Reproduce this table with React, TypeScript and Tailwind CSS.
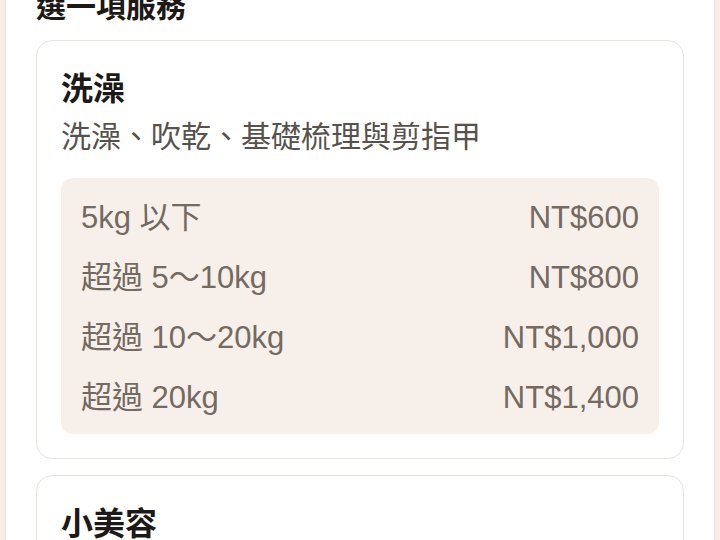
const services = [
  {
    name: "洗澡",
    desc: "洗澡、吹乾、基礎梳理與剪指甲",
    prices: [
      { label: "5kg 以下", price: "NT$600" },
      { label: "超過 5～10kg", price: "NT$800" },
      { label: "超過 10～20kg", price: "NT$1,000" },
      { label: "超過 20kg", price: "NT$1,400" },
    ],
  },
  {
    name: "小美容",
    desc: "洗澡加上腳底毛、屁屁毛與臉部修剪",
    prices: [
      { label: "5kg 以下", price: "NT$900" },
      { label: "超過 5～10kg", price: "NT$1,100" },
    ],
  },
];

const font = {
  fontFamily: '"Liberation Sans", "Noto Sans CJK TC", sans-serif',
};

export default function App() {
  return (
    <div className="h-[540px] overflow-hidden bg-[#f4ece5] px-[5px]" style={font}>
      <div className="flex h-full flex-col border-x border-[#ebe5dd] bg-white px-[30px]">
        <h2 className="-mt-[13px] text-[30px] font-bold leading-[40px] text-[#1c1917]">
          選一項服務
        </h2>

        <div className="mt-[13px] flex flex-col gap-4">
          {services.map((s) => (
            <div
              key={s.name}
              className="rounded-2xl border border-[#e8e4dc] bg-white px-6 pb-6 pt-7"
            >
              <h3 className="text-[32px] font-bold leading-[40px] text-[#1c1917]">
                {s.name}
              </h3>
              <p className="mt-[6px] text-[30px] leading-[44px] text-[#57524b]">
                {s.desc}
              </p>

              <div className="mt-[19px] flex flex-col gap-5 rounded-xl bg-[#f7efe9] px-5 pb-4 pt-5">
                {s.prices.map((p) => (
                  <div
                    key={p.label}
                    className="flex items-center justify-between text-[31px] leading-[40px] text-[#736a61]"
                  >
                    <span>{p.label}</span>
                    <span>{p.price}</span>
                  </div>
                ))}
              </div>
            </div>
          ))}
        </div>
      </div>
    </div>
  );
}
